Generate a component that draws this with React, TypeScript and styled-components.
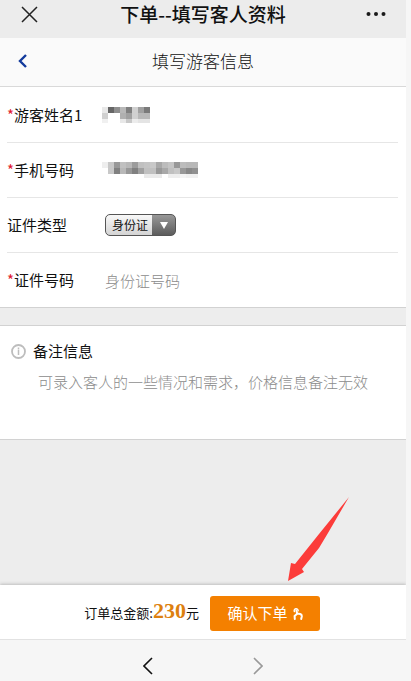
import React from 'react';
import styled, { createGlobalStyle } from 'styled-components';

const GlobalStyle = createGlobalStyle`
  * { box-sizing: border-box; }
  body {
    margin: 0;
    background: #f6f6f6;
    font-family: "Noto Sans CJK SC", sans-serif;
    font-size: 15px;
    color: #111;
  }
  button, input, select, textarea { font-family: inherit; }
`;

const Page = styled.div`
  display: flex;
  flex-direction: column;
  min-height: 100vh;
  margin-right: 5px;
  overflow: hidden;
  background: #ededed;
`;

const TitleBar = styled.header`
  display: grid;
  grid-template-columns: 60px 1fr 60px;
  align-items: center;
  height: 38px;
  padding-bottom: 10px;
  background: #ececec;
`;

const PageTitle = styled.h1`
  margin: 0;
  font-size: 19px;
  line-height: 28px;
  font-weight: 500;
  text-align: center;
  white-space: nowrap;
`;

const IconButton = styled.button<{ $align?: 'start' | 'end' }>`
  display: flex;
  align-items: center;
  justify-content: ${p => (p.$align === 'end' ? 'flex-end' : 'flex-start')};
  height: 28px;
  padding: 0 20px;
  border: 0;
  background: none;
  color: inherit;
  svg { display: block; flex: none; }
`;

const SubBar = styled.nav`
  display: grid;
  grid-template-columns: 60px 1fr 60px;
  align-items: center;
  height: 49px;
  padding-bottom: 2px;
  background: #fafafa;
  border-bottom: 1px solid #d9d9d9;
`;

const BackButton = styled(IconButton)`
  padding: 0 18px;
`;

const SubTitle = styled.h2`
  margin: 0;
  font-size: 17px;
  line-height: 26px;
  font-weight: 300;
  text-align: center;
  color: #111;
`;

const Form = styled.form`
  display: flex;
  flex-direction: column;
  flex: 1;
`;

const Fields = styled.section`
  padding: 0 8px 0 7px;
  background: #fff;
  border-bottom: 1px solid #d2d2d2;
`;

const Row = styled.div`
  display: grid;
  grid-template-columns: 98px 1fr;
  align-items: center;
  height: 55px;
  & + & { border-top: 1px solid #e6e6e6; }
`;

const Label = styled.label`
  line-height: 24px;
  white-space: nowrap;
`;

const Star = styled.span`
  color: #e0182d;
`;

const TextInput = styled.input`
  width: 100%;
  height: 32px;
  padding: 0;
  border: 0;
  outline: 0;
  background: none;
  font-size: 15px;
  font-weight: 300;
  &::placeholder { color: #8c8c8c; opacity: 1; }
`;

const Overlay = styled.div`
  position: relative;
  display: flex;
  align-items: center;
`;

const MosaicDrawing = styled.svg`
  position: absolute;
  left: -3px;
  pointer-events: none;
`;

const SelectBox = styled.div`
  position: relative;
  width: 71px;
  height: 22px;
`;

const TypeSelect = styled.select`
  appearance: none;
  display: block;
  width: 100%;
  height: 22px;
  padding: 0 24px 0 6px;
  border: 1px solid #555;
  border-radius: 5px;
  background:
    linear-gradient(#989898, #5c5c5c) right / 23px 100% no-repeat,
    linear-gradient(#f8f8f8, #d4d4d4);
  font-size: 12px;
  line-height: 20px;
  color: #111;
`;

const SelectArrow = styled.svg`
  position: absolute;
  top: 7px;
  right: 8px;
  pointer-events: none;
`;

const Remarks = styled.section`
  height: 115px;
  margin-top: 17px;
  padding: 13px 11px 0;
  background: #fff;
  border: solid #d2d2d2;
  border-width: 1px 0;
`;

const RemarksHead = styled.div`
  display: flex;
  align-items: center;
  gap: 7px;
  svg { display: block; }
`;

const RemarksInput = styled.textarea`
  display: block;
  width: 100%;
  height: 56px;
  margin-top: 7px;
  padding: 0 0 0 27px;
  border: 0;
  outline: 0;
  resize: none;
  overflow: hidden;
  background: none;
  font-size: 15px;
  line-height: 24px;
  font-weight: 300;
  &::placeholder { color: #8c8c8c; opacity: 1; }
`;

const Space = styled.div`
  position: relative;
  flex: 1;
  min-height: 100px;
`;

const Pointer = styled.svg`
  position: absolute;
  right: 56px;
  bottom: 3px;
`;

const OrderBar = styled.footer`
  display: flex;
  align-items: center;
  justify-content: flex-end;
  gap: 11px;
  height: 54px;
  padding: 3px 86px 0 0;
  background: #fff;
  box-shadow: 0 -1px 3px #bdbdbd;
`;

const Total = styled.div`
  display: flex;
  align-items: baseline;
  padding-bottom: 4px;
  font-size: 13px;
  line-height: 24px;
  white-space: nowrap;
`;

const Amount = styled.strong`
  font-family: "Liberation Serif", serif;
  font-size: 22px;
  font-weight: 700;
  color: #dd800f;
`;

const SubmitButton = styled.button`
  display: flex;
  align-items: center;
  justify-content: center;
  gap: 5px;
  width: 110px;
  height: 35px;
  padding: 0 0 3px;
  border: 0;
  border-radius: 3px;
  background: #f48000;
  color: #fff;
  font-size: 15px;
  white-space: nowrap;
  svg { margin-top: 4px; }
`;

const BrowserBar = styled.nav`
  display: flex;
  justify-content: center;
  gap: 58px;
  height: 42px;
  padding: 12px 1px 0 0;
  background: #f6f6f6;
  border-top: 1px solid #e2e2e2;
`;

const HistoryButton = styled.button`
  width: 52px;
  height: 28px;
  padding: 0;
  border: 0;
  background: none;
  color: #111;
  &:disabled { color: #999; }
  svg { display: block; margin: 0 auto; }
`;

const NAME_CELLS = [
  'e8 66 8e b8 80 d0 a0 7a',
  'd0 ff ff b0 a0 d0 b8 b8',
  'f0 ff ff e8 c8 ec e4 e4',
];

const PHONE_CELLS = [
  'ee c8 98 c0 b8 9c c0 c4 c8 a8 bc c4 98 bc b8 b8',
  'ff c8 80 b8 98 80 a0 c0 c0 98 a8 c0 c8 98 88 90',
  'ff ff ff ff ff ff ff ea ea ea ff ee ee f4 f0 f0',
];

function Mosaic({ cells }: { cells: string[] }) {
  const rows = cells.map(r => r.split(' '));
  return (
    <MosaicDrawing width={rows[0].length * 6} height="16" shapeRendering="crispEdges" aria-hidden="true">
      {rows.map((r, y) =>
        r.map((c, x) => (
          <rect key={`${x}-${y}`} x={x * 6} y={y * 6} width="6" height={y === 2 ? 4 : 6} fill={`#${c}${c}${c}`} />
        ))
      )}
    </MosaicDrawing>
  );
}

export default function App() {
  return (
    <>
      <GlobalStyle />
      <Page>
        <TitleBar>
          <IconButton type="button" aria-label="关闭">
            <svg width="18" height="18" viewBox="0 0 18 18" fill="none" stroke="#222" strokeWidth="1.5">
              <path d="M2 2l15 15M17 2L2 17" />
            </svg>
          </IconButton>
          <PageTitle>下单--填写客人资料</PageTitle>
          <IconButton type="button" $align="end" aria-label="更多">
            <svg width="20" height="6" viewBox="0 0 20 6" fill="#1a1a1a">
              <circle cx="2.5" cy="3" r="2" />
              <circle cx="10" cy="3" r="2" />
              <circle cx="17.5" cy="3" r="2" />
            </svg>
          </IconButton>
        </TitleBar>

        <SubBar>
          <BackButton type="button" aria-label="返回">
            <svg width="9" height="14" viewBox="1 0 9 14" fill="none" stroke="#123a9c" strokeWidth="2.4">
              <path d="M9 1L3 7l6 6" />
            </svg>
          </BackButton>
          <SubTitle>填写游客信息</SubTitle>
        </SubBar>

        <Form onSubmit={e => e.preventDefault()}>
          <Fields>
            <Row>
              <Label htmlFor="name"><Star>*</Star>游客姓名1</Label>
              <Overlay>
                <TextInput id="name" />
                <Mosaic cells={NAME_CELLS} />
              </Overlay>
            </Row>
            <Row>
              <Label htmlFor="phone"><Star>*</Star>手机号码</Label>
              <Overlay>
                <TextInput id="phone" type="tel" />
                <Mosaic cells={PHONE_CELLS} />
              </Overlay>
            </Row>
            <Row>
              <Label htmlFor="type">证件类型</Label>
              <SelectBox>
                <TypeSelect id="type">
                  <option>身份证</option>
                </TypeSelect>
                <SelectArrow width="8" height="8" viewBox="0 0 8 8" fill="#fff" aria-hidden="true">
                  <path d="M0 1h8L4 8z" />
                </SelectArrow>
              </SelectBox>
            </Row>
            <Row>
              <Label htmlFor="number"><Star>*</Star>证件号码</Label>
              <TextInput id="number" placeholder="身份证号码" />
            </Row>
          </Fields>

          <Remarks>
            <RemarksHead>
              <svg width="15" height="15" viewBox="0 0 15 15" fill="none" stroke="#bdbdbd" aria-hidden="true">
                <circle cx="7.5" cy="7.5" r="6.5" strokeWidth="1.8" />
                <path d="M7.5 5.6v5.4M7.5 3.6v1.4" strokeWidth="1.5" />
              </svg>
              <Label htmlFor="remarks">备注信息</Label>
            </RemarksHead>
            <RemarksInput id="remarks" placeholder="可录入客人的一些情况和需求，价格信息备注无效" />
          </Remarks>

          <Space>
            <Pointer width="62" height="85" viewBox="0 0 62 85" fill="#fc3c3a" aria-hidden="true">
              <path d="M61 0L31 37L7 67L3 66L0 84L16 75L14 72L31 51L40 36z" />
            </Pointer>
          </Space>

          <OrderBar>
            <Total>订单总金额:<Amount>230</Amount>元</Total>
            <SubmitButton type="submit">
              确认下单
              <svg width="10" height="12" viewBox="0 0 10 12" fill="none" stroke="#fff" strokeLinecap="round" strokeLinejoin="round" aria-hidden="true">
                <path d="M1.4 3.6A2 2 0 1 1 5.2 2.8" strokeWidth="1.4" />
                <path d="M3.4 2.4L4.2 5.8L1.6 8L1.8 11M4.2 5.6L7.2 6Q9 6.6 8.8 8.4L8.2 11" strokeWidth="2" />
              </svg>
            </SubmitButton>
          </OrderBar>
        </Form>

        <BrowserBar>
          <HistoryButton type="button" aria-label="后退">
            <svg width="10" height="18" viewBox="0 0 10 18" fill="none" stroke="currentColor" strokeWidth="1.6">
              <path d="M9 1L1 9l8 8" />
            </svg>
          </HistoryButton>
          <HistoryButton type="button" aria-label="前进" disabled>
            <svg width="10" height="18" viewBox="0 0 10 18" fill="none" stroke="currentColor" strokeWidth="1.6">
              <path d="M1 1l8 8-8 8" />
            </svg>
          </HistoryButton>
        </BrowserBar>
      </Page>
    </>
  );
}
